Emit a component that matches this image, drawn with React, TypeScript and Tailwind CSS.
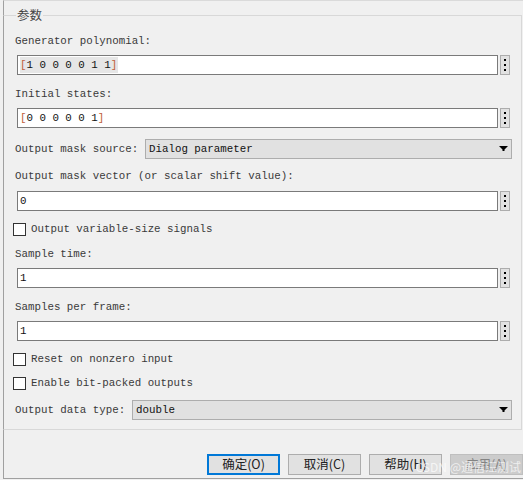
const mono = { fontFamily: '"Liberation Mono", "Noto Sans CJK SC", monospace' };

const Dots = () => (
  <button className="w-[10px] h-[20px] border border-[#adadad] bg-[#e1e1e1] flex items-center justify-center">
    <svg width="2" height="12" viewBox="0 0 2 12">
      <rect x="0" y="0" width="2" height="2" fill="#000" />
      <rect x="0" y="5" width="2" height="2" fill="#000" />
      <rect x="0" y="10" width="2" height="2" fill="#000" />
    </svg>
  </button>
);

const Arrow = () => (
  <svg width="9" height="6" viewBox="0 0 9 6" className="mr-[3px]">
    <path d="M0 0H9L5.5 3.5V5H3.5V3.5Z" fill="#000" />
  </svg>
);

const Field = ({ children, className = "" }: { children?: React.ReactNode; className?: string }) => (
  <div className={"flex items-center gap-[2px] ml-[2px] " + className}>
    <div className="w-[481px] h-[20px] bg-white border border-[#7a7a7a] flex items-center pl-[2px] text-[#111]">
      {children}
    </div>
    <Dots />
  </div>
);

const Label = ({ children, className = "" }: { children: React.ReactNode; className?: string }) => (
  <div className={"h-[16px] leading-[16px] text-[#3a3a3a] " + className}>{children}</div>
);

const Check = ({ label, className = "" }: { label: string; className?: string }) => (
  <div className={"flex items-center h-[16px] ml-[-2px] " + className}>
    <div className="w-[13px] h-[13px] bg-white border border-[#333]" />
    <span className="ml-[5px] text-[#3a3a3a]">{label}</span>
  </div>
);

const Vec = ({ v, hl }: { v: string; hl?: boolean }) => (
  <span className={hl ? "bg-[#e6e6e6] pr-[1px]" : ""}>
    <span className="text-[#c0603a]">[</span>
    {v}
    <span className="text-[#c0603a]">]</span>
  </span>
);

const Btn = ({ label, def, disabled }: { label: string; def?: boolean; disabled?: boolean }) => (
  <button
    className={
      "w-[73px] h-[21px] flex items-center justify-center text-[12.5px] " +
      (def
        ? "border-2 border-[#0078d7] bg-[#e1e1e1] text-[#222]"
        : disabled
        ? "border border-[#bfbfbf] bg-[#cccccc] text-[#838383]"
        : "border border-[#adadad] bg-[#e1e1e1] text-[#222]")
    }
    style={{ fontFamily: '"Noto Sans CJK SC", "Liberation Serif", serif' }}
  >
    {label}
  </button>
);

export default function App() {
  return (
    <div className="w-[523px] h-[480px] bg-[#f0f0f0] text-[10.8px]" style={mono}>
      <div className="relative ml-[3px] h-[479px] border-l border-t border-b border-l-[#a0a0a0] border-t-[#dadada] border-b-[#a0a0a0] flex flex-col">
        {/* group box */}
        <div className="relative mt-[14px] w-[519px] h-[415px] border-t border-r border-b border-[#d8d8d8] ml-[-1px] border-l border-l-[#a0a0a0] pl-[11px] pr-[9px] pt-[17px] flex flex-col">
          <span
            className="absolute left-[12px] top-[-9px] px-[1px] bg-[#f0f0f0] text-[12.5px] leading-[16px] text-[#444]"
            style={{ fontFamily: '"Noto Sans CJK SC", sans-serif' }}
          >
            参数
          </span>

          <Label>Generator polynomial:</Label>
          <Field className="mt-[6px]">
            <Vec v="1 0 0 0 0 1 1" hl />
          </Field>

          <Label className="mt-[11px]">Initial states:</Label>
          <Field className="mt-[6px]">
            <Vec v="0 0 0 0 0 1" />
          </Field>

          <div className="mt-[11px] flex items-center h-[20px]">
            <span className="text-[#3a3a3a]">Output mask source:</span>
            <div className="ml-auto w-[367px] h-[20px] bg-[#e1e1e1] border border-[#adadad] flex items-center justify-between pl-[3px] text-[#111]">
              <span>Dialog parameter</span>
              <Arrow />
            </div>
          </div>

          <Label className="mt-[9px]">Output mask vector (or scalar shift value):</Label>
          <Field className="mt-[7px]">0</Field>

          <Check label="Output variable-size signals" className="mt-[10px]" />

          <Label className="mt-[9px]">Sample time:</Label>
          <Field className="mt-[6px]">1</Field>

          <Label className="mt-[11px]">Samples per frame:</Label>
          <Field className="mt-[6px]">1</Field>

          <Check label="Reset on nonzero input" className="mt-[10px]" />
          <Check label="Enable bit-packed outputs" className="mt-[8px]" />

          <div className="mt-[9px] flex items-center h-[20px]">
            <span className="text-[#3a3a3a]">Output data type:</span>
            <div className="ml-auto w-[380px] h-[20px] bg-[#e1e1e1] border border-[#adadad] flex items-center justify-between pl-[3px] text-[#111]">
              <span>double</span>
              <Arrow />
            </div>
          </div>
        </div>

        {/* buttons */}
        <div className="mt-[24px] flex justify-end gap-[8px] pr-[0px] relative">
          <Btn label="确定(O)" def />
          <Btn label="取消(C)" />
          <Btn label="帮助(H)" />
          <Btn label="应用(A)" disabled />
          <span
            className="absolute right-[2px] top-[4px] text-[12px] text-[#ffffff]/70 pointer-events-none"
            style={{ fontFamily: '"Noto Sans CJK SC", sans-serif' }}
          >
            CSDN @通信汪测试
          </span>
        </div>
      </div>
    </div>
  );
}
